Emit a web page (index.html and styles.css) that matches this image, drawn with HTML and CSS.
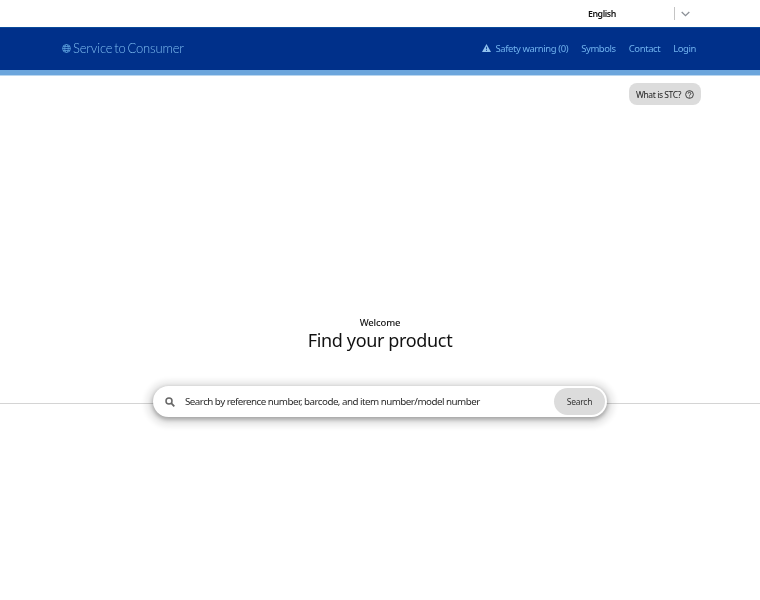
FILE: index.html
```html
<!DOCTYPE html>
<html lang="en">
<head>
<meta charset="utf-8">
<title>Service to Consumer</title>
<link rel="stylesheet" href="styles.css">
</head>
<body>
<div class="topbar">
  <div class="lang">
    <span class="lang-name">English</span>
    <span class="lang-arrow">
      <svg width="9" height="6" viewBox="0 0 9 6"><path d="M.7 1l3.800 3.600L8.300 1" fill="none" stroke="#8a8f96" stroke-width="1.300"/></svg>
    </span>
  </div>
</div>
<header class="header">
  <div class="brand">
    <svg class="globe" width="9" height="9" viewBox="0 0 10 10"><g fill="none" stroke="#5c9fdc" stroke-width=".9"><circle cx="5" cy="5" r="4.400"/><ellipse cx="5" cy="5" rx="2" ry="4.400"/><path d="M.6 5h8.800M1.200 2.800h7.600M1.200 7.200h7.600"/></g></svg>
    <span class="brand-name">Service to Consumer</span>
  </div>
  <nav class="nav">
    <a class="nav-link warn">
      <svg width="9" height="8" viewBox="0 0 9 8"><path d="M4.500 0L9 8H0z" fill="#8fc0ec"/><path d="M4.500 2.800v2.500M4.500 6v1" stroke="#00308a" stroke-width=".8"/></svg>
      Safety warning (0)</a>
    <a class="nav-link">Symbols</a>
    <a class="nav-link">Contact</a>
    <a class="nav-link">Login</a>
  </nav>
</header>
<div class="stripe"></div>
<div class="help-row">
  <button class="help">What is STC?
    <svg width="9" height="9" viewBox="0 0 10 10"><circle cx="5" cy="5" r="4.300" fill="none" stroke="#333" stroke-width="1"/><path d="M3.500 4a1.500 1.500 0 1 1 2.300 1.200c-.6.400-.8.600-.8 1.100" fill="none" stroke="#333" stroke-width="1"/><circle cx="5" cy="7.700" r=".6" fill="#333"/></svg>
  </button>
</div>
<main class="hero">
  <p class="welcome">Welcome</p>
  <h1 class="title">Find your product</h1>
  <div class="search-row">
    <form class="search">
      <svg class="search-icon" width="10" height="10" viewBox="0 0 10 10"><circle cx="4" cy="4" r="3" fill="none" stroke="#666" stroke-width="1.500"/><path d="M6.200 6.200L9.300 9.300" stroke="#666" stroke-width="1.800"/></svg>
      <span class="placeholder">Search by reference number, barcode, and item number/model number</span>
      <button class="search-btn" type="button">Search</button>
    </form>
  </div>
</main>
</body>
</html>
```

FILE: styles.css
```css
* { box-sizing: border-box; }
html { height: 100%; overflow: hidden; background: #fff; }
body {
  height: 100%;
  margin: 0 -3px;
  padding: 0 3px;
  background: #fff;
  font-family: "Noto Sans", "Open Sans", sans-serif;
  color: #111;
  filter: blur(0.4px);
}
.topbar {
  height: 27px;
  margin: 0 -3px;
  display: flex;
  justify-content: flex-end;
  align-items: center;
  padding-right: 73px;
}
.lang { display: flex; align-items: center; }
.lang-name {
  width: 86px;
  font-size: 8.800px;
  font-weight: 600;
  letter-spacing: -.45px;
  color: #111;
}
.lang-arrow {
  width: 16px;
  height: 13px;
  border-left: 1px solid #c4c4c4;
  display: flex;
  justify-content: flex-end;
  align-items: center;
}
.header {
  height: 43px;
  margin: 0 -3px;
  background: #00308a;
  border-top: 1px solid #0a4a9a;
  display: flex;
  justify-content: space-between;
  align-items: center;
  padding: 0 67px 2px 65px;
}
.brand { display: flex; align-items: center; gap: 2px; }
.brand-name {
  font-family: "Lato", sans-serif;
  font-size: 13px;
  letter-spacing: -.16px;
  word-spacing: -1.500px;
  color: #7dbcf0;
  font-weight: 300;
}
.nav { display: flex; align-items: center; gap: 13px; }
.nav-link {
  font-size: 9.500px;
  letter-spacing: -.42px;
  color: #6fb2ee;
  display: flex;
  align-items: center;
  gap: 3px;
}
.warn svg { margin-right: 1px; }
.stripe {
  height: 6px;
  margin: 0 -3px;
  background: #6ba5dc;
  border-bottom: 1px solid #b9d6ef;
}
.help-row {
  display: flex;
  justify-content: flex-end;
  padding: 7px 59px 0 0;
}
.help {
  height: 22px;
  width: 72px;
  border: 0;
  border-radius: 8px;
  background: #dcdcdc;
  font: 8.500px "Noto Sans", sans-serif;
  letter-spacing: -.42px;
  color: #222;
  display: flex;
  align-items: center;
  justify-content: center;
  gap: 4px;
  padding: 0;
}
.hero {
  display: flex;
  flex-direction: column;
  align-items: center;
  padding-top: 211px;
}
.welcome {
  margin: 0;
  font-size: 9.500px;
  font-weight: 500;
  letter-spacing: -.15px;
  line-height: 14px;
  color: #111;
}
.title {
  margin: 0;
  font-size: 18px;
  letter-spacing: -.35px;
  line-height: 20px;
  font-weight: 400;
  color: #111;
}
.search-row {
  width: 100%;
  margin-top: 36px;
  display: flex;
  justify-content: center;
  background: linear-gradient(#d4d4d4, #d4d4d4) 0 17px / 100% 1px no-repeat;
}
.search {
  width: 454px;
  height: 31px;
  background: #fff;
  border-radius: 16px;
  box-shadow: 0 2px 4px 1px rgba(0,0,0,.3), 0 2px 5px 8px rgba(0,0,0,.07);
  display: flex;
  align-items: center;
  padding: 0 2px 0 12px;
}
.search-icon { flex: none; }
.placeholder {
  flex: 1;
  margin-left: 10px;
  font-size: 9.800px;
  letter-spacing: -.53px;
  color: #2a2a2a;
  white-space: nowrap;
}
.search-btn {
  width: 51px;
  height: 27px;
  border: 0;
  border-radius: 14px;
  background: #dcdcdc;
  font: 8.500px "Noto Sans", sans-serif;
  letter-spacing: -.25px;
  color: #333;
  padding: 0;
}
```
